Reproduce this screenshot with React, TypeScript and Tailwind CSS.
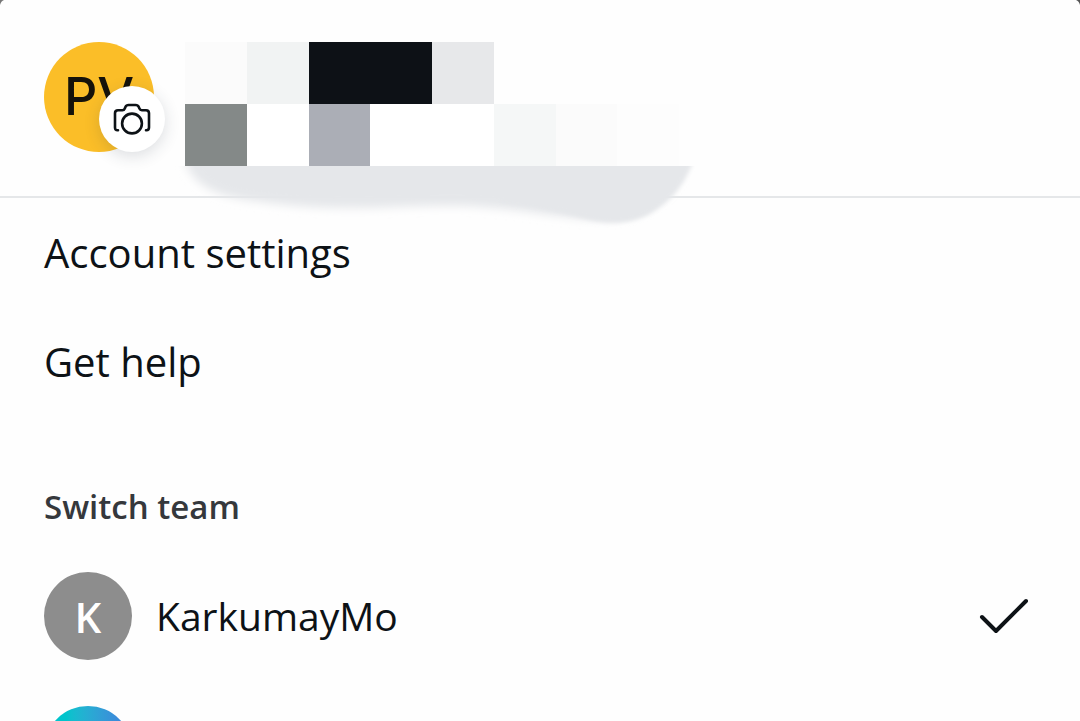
const MOSAIC = [
  'bg-[#fbfbfb]',
  'bg-[#f1f3f3]',
  'bg-[#0d1116]',
  'bg-[#0d1116]',
  'bg-[#e7e8ea]',
  'bg-[#fefefe]',
  'bg-[#fefefe]',
  'bg-[#fefefe]',
  'bg-[#848988]',
  'bg-white',
  'bg-[#abaeb6]',
  'bg-white',
  'bg-white',
  'bg-[#f5f7f7]',
  'bg-[#fbfbfb]',
  'bg-[#fdfdfd]',
];

function CameraIcon() {
  return (
    <svg viewBox="0 0 38 32" className="h-8 w-[38px]" fill="none" stroke="#0d1216" strokeWidth="2.6" strokeLinecap="round" strokeLinejoin="round" aria-hidden="true">
      <path d="M5 27.3H4.5Q2 27.3 2 24.6V10.2Q2 7.2 5 7.2H9.4Q11.1 7.2 11.8 5.5L12.4 4.1Q13.3 2 15.6 2H22.6Q24.9 2 25.8 4.1L26.4 5.5Q27.1 7.2 28.8 7.2H33Q36 7.2 36 10.2V24.6Q36 27.3 33.5 27.3H33" />
      <circle cx="19" cy="20.5" r="9.9" />
    </svg>
  );
}

function Smudge() {
  return (
    <svg viewBox="0 0 540 80" className="pointer-events-none absolute left-[170px] top-[166px] h-20 w-[540px]" aria-hidden="true">
      <defs>
        <filter id="soft" x="-10%" y="-40%" width="120%" height="180%">
          <feGaussianBlur stdDeviation="5" />
        </filter>
        <filter id="crisp" x="-10%" y="-40%" width="120%" height="180%">
          <feGaussianBlur stdDeviation="2" />
        </filter>
      </defs>
      <path filter="url(#soft)" fill="#e5e7ea" d="M12 -14C18 12 34 26 70 33C110 39 140 42 180 42C230 42 280 37 325 42C370 46 402 54 440 53C480 48 500 26 510 -14Z" />
      <path filter="url(#crisp)" fill="#e5e7ea" d="M330 -10V36C365 40 390 46 412 52C434 58 458 60 480 48C502 35 516 18 525 -10Z" />
    </svg>
  );
}

export default function App() {
  return (
    <main className="relative h-screen overflow-hidden bg-[#fefefe] font-['Open_Sans',sans-serif] text-[#0d1216]">
      <div className="absolute inset-x-0 top-0 flex justify-between" aria-hidden="true">
        <svg viewBox="0 0 4 5" className="h-[5px] w-1"><path d="M0 0H4Q1 1 0 5Z" fill="#777" /></svg>
        <svg viewBox="0 0 4 5" className="h-[5px] w-1"><path d="M4 0H0Q3 1 4 5Z" fill="#555" /></svg>
      </div>
      <header className="relative border-b-2 border-[#e5e7e9] pb-[30px] pl-11 pt-[42px]">
        <div className="flex gap-[31px]">
          <div className="relative size-[110px] shrink-0">
            <div className="flex size-full items-center justify-center rounded-full bg-[#fbbe28] font-['Inter',sans-serif] text-[52px] font-medium text-[#15120a]">
              PV
            </div>
            <button type="button" aria-label="Change photo" className="absolute left-[55px] top-11 flex size-[66px] items-center justify-center rounded-full bg-white shadow-[0_4px_16px_rgba(40,50,70,0.16)]">
              <CameraIcon />
            </button>
          </div>
          <div className="grid h-[124px] w-[494px] grid-cols-8 grid-rows-2" aria-hidden="true">
            {MOSAIC.map((color, i) => (
              <div key={i} className={color} />
            ))}
          </div>
        </div>
        <Smudge />
      </header>
      <nav>
        <a href="#settings" className="flex h-[109px] items-center px-11 text-[40px]">Account settings</a>
        <a href="#help" className="flex h-[109px] items-center px-11 text-[40px]">Get help</a>
      </nav>
      <section className="pt-[67px]">
        <h2 className="px-11 text-[33px] font-semibold leading-[48px] text-[#35383c]">Switch team</h2>
        <ul className="pt-[18px]">
          <li>
            <button type="button" className="flex h-[134px] w-full items-center gap-6 pl-11 pr-[51px] text-left text-[39px]">
              <span className="flex size-[88px] items-center justify-center rounded-full bg-[#8d8d8d] text-[42px] font-semibold text-white">K</span>
              <span className="flex-1">KarkumayMo</span>
              <svg viewBox="0 0 50 36" className="h-9 w-[50px]" fill="none" stroke="#0d1216" strokeWidth="4" strokeLinecap="round" strokeLinejoin="round" aria-hidden="true">
                <path d="M3 19L17 33L47 3" />
              </svg>
            </button>
          </li>
          <li>
            <button type="button" aria-label="Other team" className="flex h-[134px] w-full items-center pl-11">
              <span className="size-[88px] rounded-full bg-linear-to-r from-[#00c4cc] from-25% to-[#3f7fdc] to-95%" />
            </button>
          </li>
        </ul>
      </section>
    </main>
  );
}
